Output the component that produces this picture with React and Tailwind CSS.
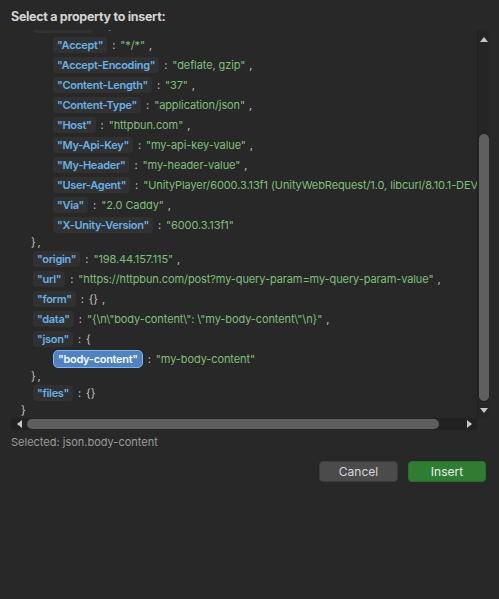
import React from "react";

const Pill = ({ children, selected }) =>
  selected ? (
    <span className="inline-flex items-center h-[18px] px-[4px] rounded-[5px] bg-[#4e82c0] border border-[#80b3ee] text-[#f4f8ff] font-semibold leading-none tracking-[-0.3px]">
      {children}
    </span>
  ) : (
    <span className="inline-flex items-center h-[16px] px-[4px] rounded-[4px] bg-[#313131] text-[#6ab0e6] font-semibold leading-none tracking-[-0.3px]">
      {children}
    </span>
  );

const Colon = () => <span className="mx-[5px] text-[#c4c4c4]">:</span>;
const Comma = () => <span className="ml-[4px] text-[#c4c4c4]">,</span>;
const Str = ({ children }) => <span className="text-[#80bf7c]">{children}</span>;

const KeyRow = ({ indent, k, value, comma, selected, raw }) => (
  <div className={"flex items-center h-[20px] whitespace-nowrap " + indent}>
    <Pill selected={selected}>"{k}"</Pill>
    <Colon />
    {raw ? <span className="text-[#c4c4c4]">{value}</span> : <Str>"{value}"</Str>}
    {comma && <Comma />}
  </div>
);

const Brace = ({ indent, comma }) => (
  <div className={"flex items-center h-[14px] whitespace-nowrap text-[#c4c4c4] " + indent}>
    <span>{"}"}</span>
    {comma && <span className="ml-[2px]">,</span>}
  </div>
);

const Tri = ({ dir }) => {
  const pts = {
    up: "0,5 4,0 8,5",
    down: "0,0 8,0 4,5",
    left: "5,0 5,8 0,4",
    right: "0,0 0,8 5,4",
  }[dir];
  const w = dir === "up" || dir === "down" ? 8 : 5;
  const h = dir === "up" || dir === "down" ? 5 : 8;
  return (
    <svg width={w} height={h} viewBox={`0 0 ${w} ${h}`}>
      <polygon points={pts} fill="#c8c8c8" />
    </svg>
  );
};

export default function App() {
  const L1 = "pl-[22px]";
  const L2 = "pl-[42px]";
  const headers = [
    ["Accept", "*/*", true],
    ["Accept-Encoding", "deflate, gzip", true],
    ["Content-Length", "37", true],
    ["Content-Type", "application/json", true],
    ["Host", "httpbun.com", true],
    ["My-Api-Key", "my-api-key-value", true],
    ["My-Header", "my-header-value", true],
    ["User-Agent", "UnityPlayer/6000.3.13f1 (UnityWebRequest/1.0, libcurl/8.10.1-DEV)", true],
    ["Via", "2.0 Caddy", true],
    ["X-Unity-Version", "6000.3.13f1", false],
  ];
  return (
    <div className="w-[499px] h-[599px] bg-[#282828] font-['Inter',sans-serif] pl-[11px] pr-[10px] pt-[9px] flex flex-col">
      <div className="h-[21px] text-[12.5px] leading-[16px] font-bold tracking-[-0.3px] text-[#d4d4d4]">
        Select a property to insert:
      </div>
      <div className="flex h-[388px]">
        <div className="flex-1 overflow-hidden text-[11px] tracking-[-0.1px]">
          <div className="-mt-[15px]">
            <div className="flex items-center h-[20px] whitespace-nowrap pl-[22px]">
              <Pill>"headers"</Pill>
              <Colon />
              <span className="text-[#c4c4c4]">{"{"}</span>
            </div>
            {headers.map(([k, v, c]) => (
              <KeyRow key={k} indent={L2} k={k} value={v} comma={c} />
            ))}
            <Brace indent="pl-[20px]" comma />
            <KeyRow indent={L1} k="origin" value="198.44.157.115" comma />
            <KeyRow indent={L1} k="url" value="https://httpbun.com/post?my-query-param=my-query-param-value" comma />
            <KeyRow indent={L1} k="form" value="{}" raw comma />
            <KeyRow indent={L1} k="data" value={'{\\n\\"body-content\\": \\"my-body-content\\"\\n}'} comma />
            <KeyRow indent={L1} k="json" value="{" raw />
            <KeyRow indent={L2} k="body-content" value="my-body-content" selected />
            <Brace indent="pl-[20px]" comma />
            <KeyRow indent={L1} k="files" value="{}" raw />
            <Brace indent="pl-[10px]" />
          </div>
        </div>
        <div className="w-[12px] bg-[#252525] border-l border-[#1f1f1f] flex flex-col items-center">
          <div className="h-[16px] flex items-center justify-center mt-[1px]">
            <Tri dir="up" />
          </div>
          <div className="flex-1 w-full pl-[1px] pt-[87px] pb-[3px] flex">
            <div className="flex-1 rounded-full bg-[#5f5f5f]" />
          </div>
          <div className="h-[14px] flex items-start justify-center pt-[4px]">
            <Tri dir="down" />
          </div>
        </div>
      </div>
      <div className="flex h-[12px]">
        <div className="flex-1 bg-[#222222] flex items-center">
          <div className="w-[16px] flex justify-center">
            <Tri dir="left" />
          </div>
          <div className="h-[10px] w-[412px] rounded-full bg-[#5f5f5f]" />
          <div className="flex-1 flex justify-end pr-[5px]">
            <Tri dir="right" />
          </div>
        </div>
        <div className="w-[12px]" />
      </div>
      <div className="mt-[4px] h-[16px] leading-[16px] text-[11px] text-[#9c9c9c]">
        Selected: json.body-content
      </div>
      <div className="mt-[11px] flex justify-end gap-[10px] pr-[3px]">
        <button className="w-[79px] h-[21px] rounded-[4px] bg-[#4b4b4b] border border-[#3c3c3c] text-[12px] text-[#d8d8d8] leading-none">
          Cancel
        </button>
        <button className="w-[78px] h-[21px] rounded-[4px] bg-[#2f7d33] border border-[#2a6e2d] text-[12px] text-[#e8f0e8] leading-none">
          Insert
        </button>
      </div>
    </div>
  );
}
